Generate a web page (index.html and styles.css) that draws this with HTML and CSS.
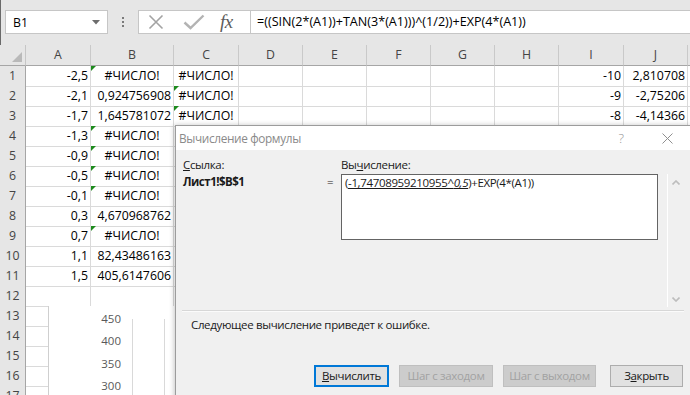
FILE: index.html
```html
<!DOCTYPE html>
<html lang="ru">
<head>
<meta charset="utf-8">
<title>Excel</title>
<link rel="stylesheet" href="styles.css">
</head>
<body>
<div class="fbar">
  <div class="namebox"><span>B1</span><svg class="dd" width="8" height="5" viewBox="0 0 8 5"><path d="M0 0H8L4 4.5Z" fill="#6d6d6d"/></svg></div>
  <div class="dots"><i></i><i></i><i></i></div>
  <div class="fxbox">
    <svg class="ico-x" width="16" height="16" viewBox="0 0 16 16"><path d="M1.5 1.5L14.5 14.5M14.5 1.5L1.5 14.5" stroke="#a3a3a3" stroke-width="1.6" fill="none"/></svg>
    <svg class="ico-ok" width="22" height="16" viewBox="0 0 22 16"><path d="M1.5 8.5L7.5 14L20.5 1.5" stroke="#b3b3b3" stroke-width="2.4" fill="none"/></svg>
    <span class="fx">fx</span>
  </div>
  <div class="formula">=((SIN(2*(A1))+TAN(3*(A1)))^(1/2))+EXP(4*(A1))</div>
</div>

<div class="sheet">
  <div class="row hdr">
    <div class="corner"><svg width="10" height="10" viewBox="0 0 10 10"><path d="M10 0V10H0Z" fill="#b9b9b9"/></svg></div>
    <div class="ch">A</div><div class="ch">B</div><div class="ch">C</div><div class="ch">D</div><div class="ch">E</div><div class="ch">F</div><div class="ch">G</div><div class="ch">H</div><div class="ch">I</div><div class="ch">J</div><div class="ch end"></div>
  </div>
  <div class="row"><div class="rh">1</div><div class="c r">-2,5</div><div class="c m tri">#ЧИСЛО!</div><div class="c m">#ЧИСЛО!</div><div class="c"></div><div class="c"></div><div class="c"></div><div class="c"></div><div class="c"></div><div class="c r">-10</div><div class="c r">2,810708</div><div class="c end"></div></div>
  <div class="row"><div class="rh">2</div><div class="c r">-2,1</div><div class="c r">0,924756908</div><div class="c m tri">#ЧИСЛО!</div><div class="c"></div><div class="c"></div><div class="c"></div><div class="c"></div><div class="c"></div><div class="c r">-9</div><div class="c r">-2,75206</div><div class="c end"></div></div>
  <div class="row"><div class="rh">3</div><div class="c r">-1,7</div><div class="c r">1,645781072</div><div class="c m tri">#ЧИСЛО!</div><div class="c"></div><div class="c"></div><div class="c"></div><div class="c"></div><div class="c"></div><div class="c r">-8</div><div class="c r">-4,14366</div><div class="c end"></div></div>
  <div class="row"><div class="rh">4</div><div class="c r">-1,3</div><div class="c m tri">#ЧИСЛО!</div><div class="c"></div><div class="c"></div><div class="c"></div><div class="c"></div><div class="c"></div><div class="c"></div><div class="c"></div><div class="c"></div><div class="c end"></div></div>
  <div class="row"><div class="rh">5</div><div class="c r">-0,9</div><div class="c m tri">#ЧИСЛО!</div><div class="c"></div><div class="c"></div><div class="c"></div><div class="c"></div><div class="c"></div><div class="c"></div><div class="c"></div><div class="c"></div><div class="c end"></div></div>
  <div class="row"><div class="rh">6</div><div class="c r">-0,5</div><div class="c m tri">#ЧИСЛО!</div><div class="c"></div><div class="c"></div><div class="c"></div><div class="c"></div><div class="c"></div><div class="c"></div><div class="c"></div><div class="c"></div><div class="c end"></div></div>
  <div class="row"><div class="rh">7</div><div class="c r">-0,1</div><div class="c m tri">#ЧИСЛО!</div><div class="c"></div><div class="c"></div><div class="c"></div><div class="c"></div><div class="c"></div><div class="c"></div><div class="c"></div><div class="c"></div><div class="c end"></div></div>
  <div class="row"><div class="rh">8</div><div class="c r">0,3</div><div class="c r">4,670968762</div><div class="c"></div><div class="c"></div><div class="c"></div><div class="c"></div><div class="c"></div><div class="c"></div><div class="c"></div><div class="c"></div><div class="c end"></div></div>
  <div class="row"><div class="rh">9</div><div class="c r">0,7</div><div class="c m tri">#ЧИСЛО!</div><div class="c"></div><div class="c"></div><div class="c"></div><div class="c"></div><div class="c"></div><div class="c"></div><div class="c"></div><div class="c"></div><div class="c end"></div></div>
  <div class="row"><div class="rh">10</div><div class="c r">1,1</div><div class="c r">82,43486163</div><div class="c"></div><div class="c"></div><div class="c"></div><div class="c"></div><div class="c"></div><div class="c"></div><div class="c"></div><div class="c"></div><div class="c end"></div></div>
  <div class="row"><div class="rh">11</div><div class="c r">1,5</div><div class="c r">405,6147606</div><div class="c"></div><div class="c"></div><div class="c"></div><div class="c"></div><div class="c"></div><div class="c"></div><div class="c"></div><div class="c"></div><div class="c end"></div></div>
  <div class="row"><div class="rh">12</div><div class="c"></div><div class="c"></div><div class="c"></div><div class="c"></div><div class="c"></div><div class="c"></div><div class="c"></div><div class="c"></div><div class="c"></div><div class="c"></div><div class="c end"></div></div>
  <div class="row"><div class="rh">13</div><div class="c"></div><div class="c"></div><div class="c"></div><div class="c"></div><div class="c"></div><div class="c"></div><div class="c"></div><div class="c"></div><div class="c"></div><div class="c"></div><div class="c end"></div></div>
  <div class="row"><div class="rh">14</div><div class="c"></div><div class="c"></div><div class="c"></div><div class="c"></div><div class="c"></div><div class="c"></div><div class="c"></div><div class="c"></div><div class="c"></div><div class="c"></div><div class="c end"></div></div>
  <div class="row"><div class="rh">15</div><div class="c"></div><div class="c"></div><div class="c"></div><div class="c"></div><div class="c"></div><div class="c"></div><div class="c"></div><div class="c"></div><div class="c"></div><div class="c"></div><div class="c end"></div></div>
  <div class="row"><div class="rh">16</div><div class="c"></div><div class="c"></div><div class="c"></div><div class="c"></div><div class="c"></div><div class="c"></div><div class="c"></div><div class="c"></div><div class="c"></div><div class="c"></div><div class="c end"></div></div>
  <div class="row"><div class="rh">17</div><div class="c"></div><div class="c"></div><div class="c"></div><div class="c"></div><div class="c"></div><div class="c"></div><div class="c"></div><div class="c"></div><div class="c"></div><div class="c"></div><div class="c end"></div></div>
</div>

<div class="chart">
  <div class="ylabels"><span>450</span><span>400</span><span>350</span><span>300</span></div>
  <div class="vline v1"></div>
  <div class="vline v2"></div>
</div>

<div class="dlg">
  <div class="dtitle">
    <span class="ttext">Вычисление формулы</span>
    <span class="tbtn q">?</span>
    <span class="tbtn"><svg width="11" height="11" viewBox="0 0 11 11"><path d="M0.5 0.5L10.5 10.5M10.5 0.5L0.5 10.5" stroke="#8f8f8f" stroke-width="1" fill="none"/></svg></span>
  </div>
  <div class="dbody">
    <div class="dgrid">
      <div class="lbl"><u>С</u>сылка:</div>
      <div></div>
      <div class="lbl">Вы<u>ч</u>исление:</div>
      <div></div><div></div>
      <div class="ref">Лист1!$B$1</div>
      <div class="eq">=</div>
      <div class="evalbox">(<u>-1,74708959210955^<i>0,5</i></u>)+EXP(4*(A1))</div>
      <div></div>
      <div class="vscroll">
        <svg width="8" height="5" viewBox="0 0 8 5"><path d="M0.5 4.5L4 1L7.5 4.5" stroke="#bdbdbd" stroke-width="1.6" fill="none"/></svg>
        <svg width="8" height="5" viewBox="0 0 8 5"><path d="M0.5 0.5L4 4L7.5 0.5" stroke="#bdbdbd" stroke-width="1.6" fill="none"/></svg>
      </div>
    </div>
    <div class="sep"></div>
    <div class="msg">Следующее вычисление приведет к ошибке.</div>
    <div class="btns">
      <div class="btn def"><u>В</u>ычислить</div>
      <div class="btn dis b2">Шаг с заходом</div>
      <div class="btn dis b3">Шаг с выходом</div>
      <div class="btn b4">З<u>а</u>крыть</div>
    </div>
  </div>
</div>
</body>
</html>
```
FILE: styles.css
```css
* { box-sizing: border-box; }
html, body { margin: 0; padding: 0; }
body {
  width: 690px;
  height: 395px;
  overflow: hidden;
  position: relative;
  background: #ffffff;
  font-family: "Open Sans", "DejaVu Sans", sans-serif;
  color: #000;
}

/* formula bar */
.fbar {
  height: 45px;
  background: #e6e6e6;
  display: flex;
  align-items: flex-start;
  padding-top: 10px;
  border-left: 1px solid #6a6a6a;
}
.namebox {
  margin-left: 4px;
  width: 103px;
  height: 24px;
  background: #fff;
  border: 1px solid #c6c6c6;
  display: flex;
  align-items: center;
  justify-content: space-between;
  padding: 0 7px 0 7px;
  font-size: 12.3px;
}
.dots {
  width: 30px;
  height: 24px;
  display: flex;
  flex-direction: column;
  align-items: center;
  justify-content: center;
  gap: 2px;
}
.dots i {
  width: 2px;
  height: 2px;
  background: #7a7a7a;
  display: block;
}
.fxbox {
  width: 113px;
  height: 24px;
  background: #fff;
  border: 1px solid #c6c6c6;
  display: flex;
  align-items: center;
  padding-left: 9px;
}
.ico-x { margin-right: 19px; }
.ico-ok { margin-right: 15px; }
.fx {
  font-family: "Liberation Serif", "DejaVu Serif", serif;
  font-style: italic;
  font-size: 19px;
  color: #5c5c5c;
  letter-spacing: -0.5px;
  line-height: 20px;
}
.formula {
  flex: 1;
  height: 24px;
  background: #fff;
  border: 1px solid #c6c6c6;
  border-left: none;
  border-right: none;
  padding-left: 6px;
  font-size: 12.6px;
  line-height: 22px;
  white-space: nowrap;
}

/* sheet */
.sheet { font-size: 12.3px; }
.row {
  display: grid;
  grid-template-columns: 26px 65px 83px 65px 64px 64px 64px 64px 64px 65px 64px 1fr;
  height: 20px;
}
.row.hdr { height: 21px; }
.corner {
  background: #e6e6e6;
  border-right: 1px solid #c6c6c6;
  border-bottom: 1px solid #a6a6a6;
  display: flex;
  align-items: flex-end;
  justify-content: flex-end;
  padding: 0 3px 3px 0;
}
.ch {
  background: #e6e6e6;
  border-right: 1px solid #c9c9c9;
  border-bottom: 1px solid #a6a6a6;
  text-align: center;
  color: #444;
  line-height: 20px;
}
.ch.end { border-right: none; }
.rh {
  background: #e6e6e6;
  border-right: 1px solid #a6a6a6;
  border-bottom: 1px solid #c9c9c9;
  text-align: center;
  color: #444;
  line-height: 20px;
}
.c {
  position: relative;
  border-right: 1px solid #dadada;
  border-bottom: 1px solid #dadada;
  line-height: 20px;
  padding: 0 2px;
  white-space: nowrap;
}
.c.end { border-right: none; }
.c.r { text-align: right; }
.c.m { text-align: center; }
.tri::before {
  content: "";
  position: absolute;
  left: 0;
  top: 0;
  border-top: 5px solid #1d8a1d;
  border-right: 5px solid transparent;
}

/* chart */
.chart {
  position: absolute;
  left: 48px;
  top: 306px;
  width: 140px;
  height: 100px;
  background: #fff;
  border-left: 1px solid #cfcfcf;
}
.ylabels {
  width: 72px;
  padding-top: 2px;
  display: flex;
  flex-direction: column;
  align-items: flex-end;
  font-size: 11.5px;
  color: #595959;
}
.ylabels span { line-height: 22.3px; }
.vline {
  position: absolute;
  top: 13px;
  bottom: 0;
  width: 1px;
  background: #d9d9d9;
}
.v1 { left: 83px; }
.v2 { left: 115px; }

/* dialog */
.dlg {
  position: absolute;
  left: 175px;
  top: 125px;
  width: 516px;
  height: 290px;
  background: #f0f0f0;
  border: 1px solid #9c9c9c;
  box-shadow: -1px 0 5px rgba(0, 0, 0, 0.22);
  font-size: 11.5px;
  letter-spacing: -0.35px;
  color: #1a1a1a;
}
.dtitle {
  height: 24px;
  background: #fff;
  display: flex;
  align-items: center;
  padding-left: 3px;
}
.ttext {
  flex: 1;
  color: #8a8a8a;
  font-size: 11.8px;
}
.tbtn {
  width: 46px;
  height: 24px;
  display: flex;
  align-items: center;
  justify-content: center;
  color: #8f8f8f;
}
.tbtn.q { font-size: 13px; font-weight: 300; }
.dbody { padding: 7px 6px 0 7px; }
.dgrid {
  display: grid;
  grid-template-columns: 140px 18px 317px 9px 16px;
  grid-template-rows: 16px 133px;
  row-gap: 1px;
}
.lbl { line-height: 16px; }
.ref { font-weight: bold; line-height: 16px; letter-spacing: -0.5px; }
.eq { line-height: 16px; padding-left: 4px; }
.evalbox {
  height: 66px;
  background: #fff;
  border: 1px solid #646464;
  padding: 0 3px;
  line-height: 16px;
  white-space: nowrap;
}
.vscroll {
  border-left: 1px solid #fff;
  display: flex;
  flex-direction: column;
  justify-content: space-between;
  align-items: center;
  padding: 6px 0 5px 1px;
}
.sep {
  margin: 3px 0 0 -1px;
  height: 2px;
  border-top: 1px solid #d7d7d7;
  border-bottom: 1px solid #fbfbfb;
}
.msg {
  margin-top: 5px;
  padding-left: 8px;
  line-height: 16px;
}
.btns {
  margin-top: 32px;
  display: flex;
  justify-content: flex-end;
  padding-right: 1px;
}
.btn {
  height: 22px;
  border: 1px solid #adadad;
  background: #e1e1e1;
  display: flex;
  align-items: center;
  justify-content: center;
  line-height: 16px;
  white-space: nowrap;
}
.btn.def { width: 75px; border: 2px solid #0078d7; }
.btn.dis { background: #cccccc; border-color: #bfbfbf; color: #a2a2a2; }
.b2 { width: 94px; margin-left: 10px; }
.b3 { width: 93px; margin-left: 10px; }
.b4 { width: 73px; margin-left: 14px; }
```
